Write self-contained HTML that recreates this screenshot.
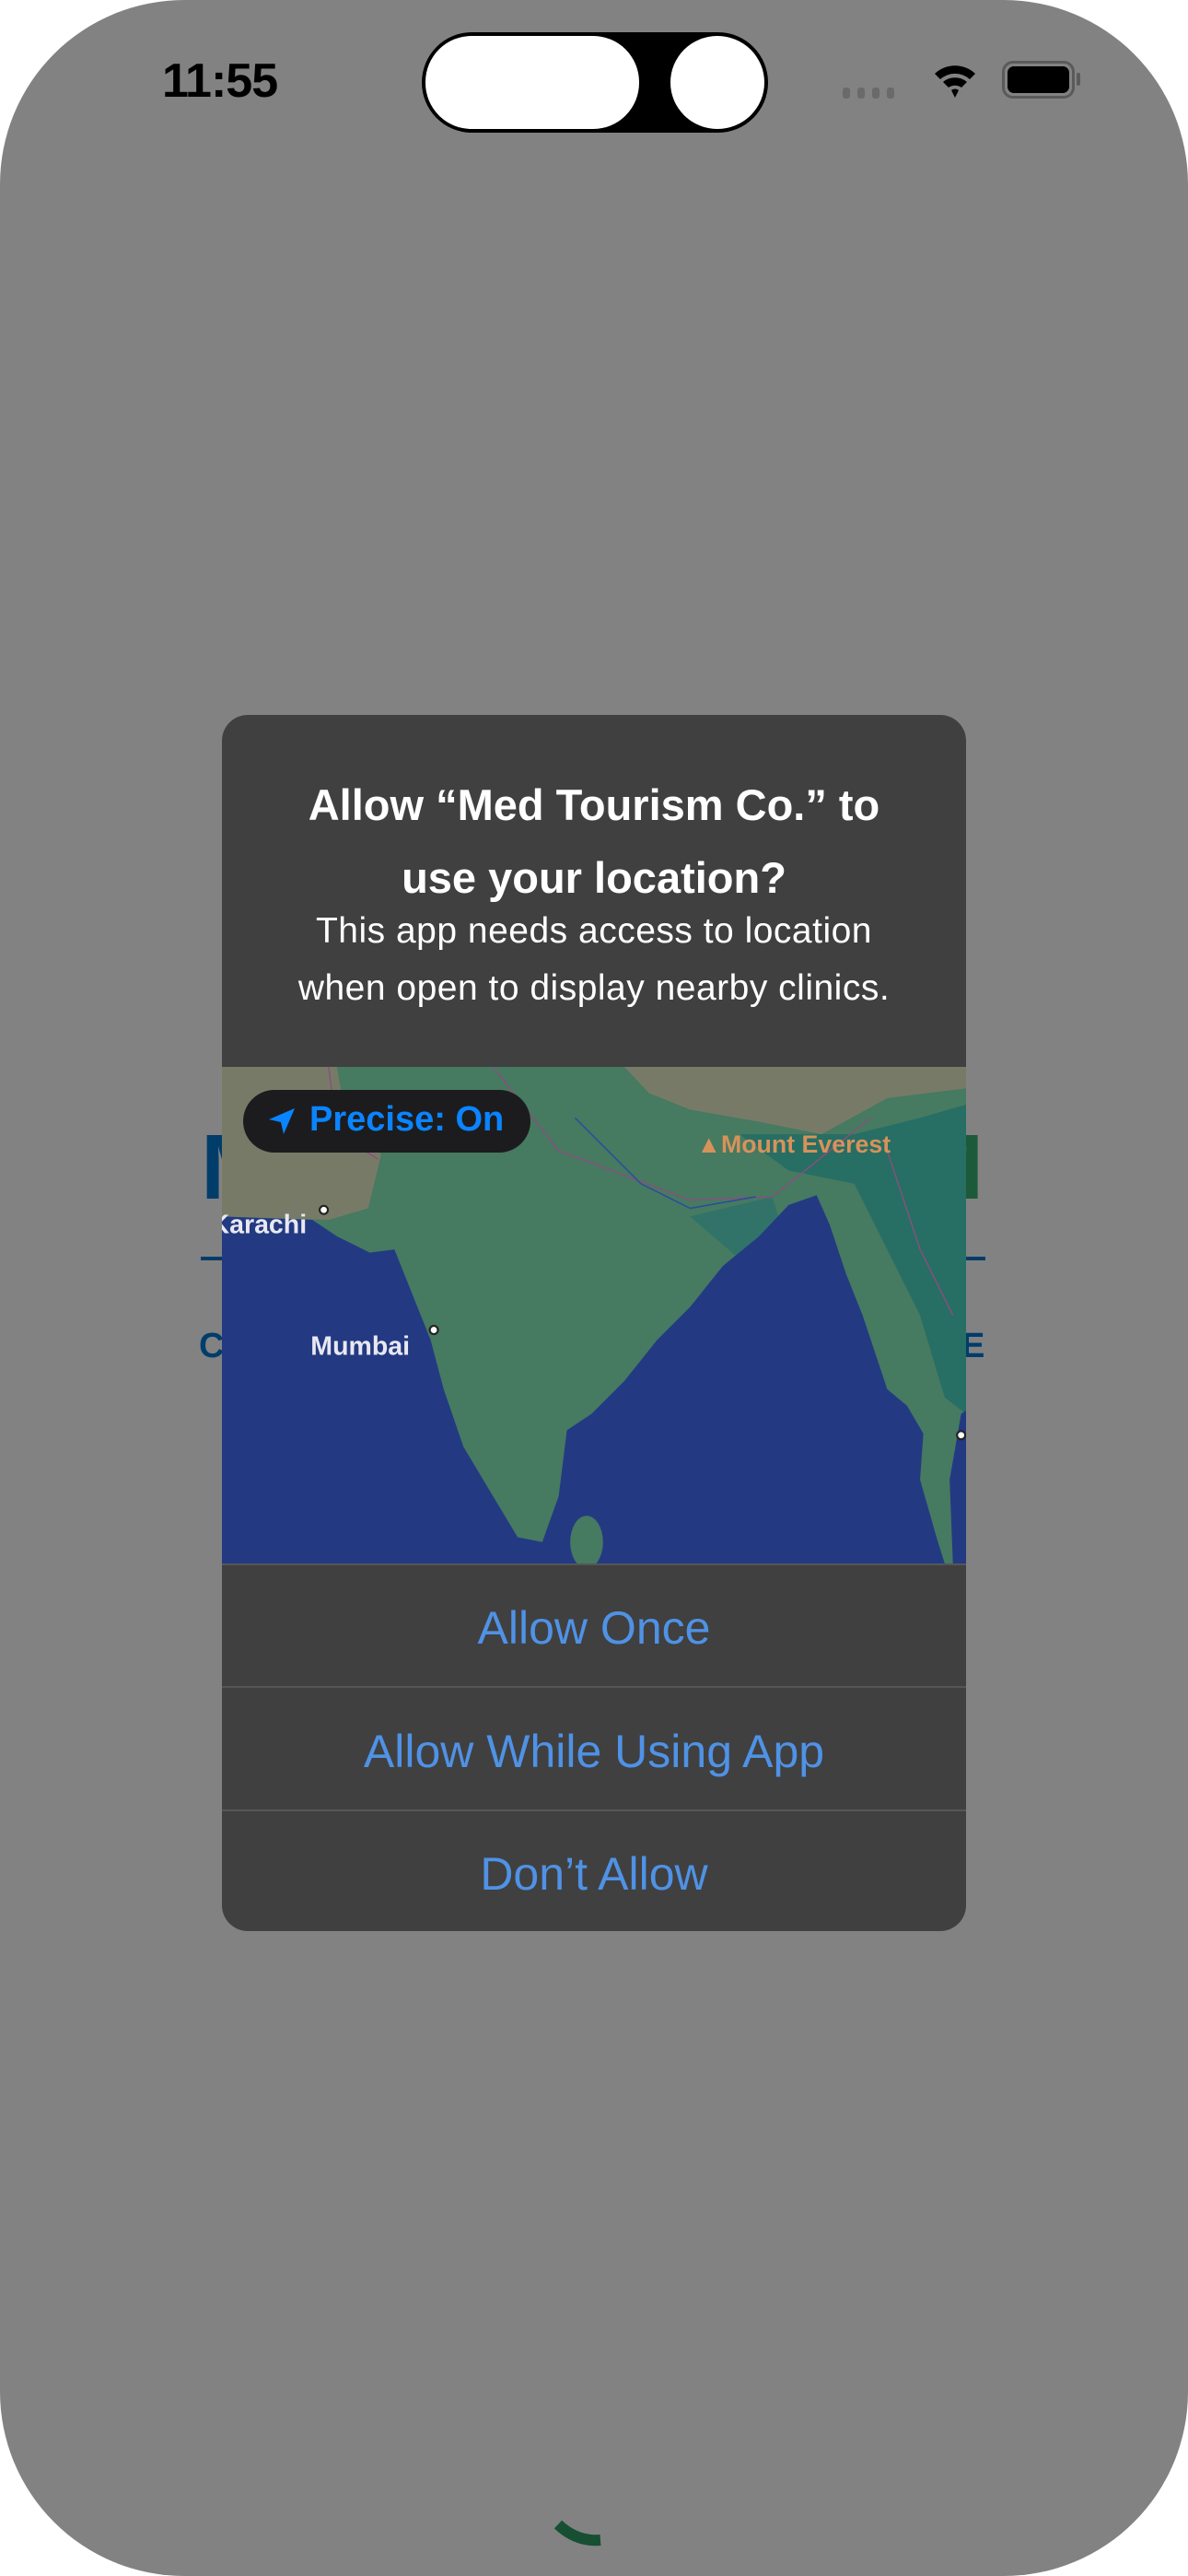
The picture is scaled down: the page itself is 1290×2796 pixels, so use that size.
<!DOCTYPE html>
<html><head><meta charset="utf-8"><style>
*{margin:0;padding:0;box-sizing:border-box}
body{width:1290px;height:2796px;background:#fff;overflow:hidden;font-family:"Liberation Sans",sans-serif;position:relative}
.screen{position:absolute;left:0;top:0;width:1290px;height:2796px;background:#828282;border-radius:200px}
.abs{position:absolute}
.dlg{position:absolute;left:241px;top:776px;width:808px;height:1320px;background:#404040;border-radius:28px;overflow:hidden}
.t{position:absolute;left:0;width:808px;text-align:center;color:#fff}
.btn{position:absolute;left:0;width:808px;text-align:center;color:#4f92e6;font-size:50px}
.div{position:absolute;left:0;width:808px;height:2px;background:#565656}
</style></head><body>
<div class="screen"></div>
<div class="abs" style="left:176px;top:58px;font-size:52px;font-weight:bold;color:#000;letter-spacing:-1px">11:55</div>
<div class="abs" style="left:458px;top:35px;width:376px;height:109px;background:#000;border-radius:55px"></div>
<div class="abs" style="left:462px;top:39px;width:232px;height:101px;background:#fff;border-radius:50px"></div>
<div class="abs" style="left:728px;top:39px;width:102px;height:101px;background:#fff;border-radius:50%"></div>
<div class="abs" style="left:915px;top:95px;width:8px;height:12px;background:#6a6a6a;border-radius:3px"></div>
<div class="abs" style="left:931px;top:95px;width:8px;height:12px;background:#6a6a6a;border-radius:3px"></div>
<div class="abs" style="left:947px;top:95px;width:8px;height:12px;background:#6a6a6a;border-radius:3px"></div>
<div class="abs" style="left:963px;top:95px;width:8px;height:12px;background:#6a6a6a;border-radius:3px"></div>
<svg class="abs" style="left:1012px;top:64px" width="50" height="46" viewBox="0 0 50 46"><path d="M3 16 A32 32 0 0 1 47 16 L41 22 A24 24 0 0 0 9 22Z M12 25 A20 20 0 0 1 38 25 L32 31 A12 12 0 0 0 18 31Z M21 34 A6 6 0 0 1 29 34 L25 42Z" fill="#000"/></svg>
<div class="abs" style="left:1088px;top:66px;width:79px;height:41px;border:3px solid #5a5a5a;border-radius:12px"></div>
<div class="abs" style="left:1094px;top:72px;width:67px;height:29px;background:#000;border-radius:7px"></div>
<div class="abs" style="left:1169px;top:79px;width:4px;height:14px;background:#5a5a5a;border-radius:2px"></div>
<div class="abs" style="left:218px;top:1210px;font-size:100px;font-weight:bold;color:#003d6b">M</div>
<div class="abs" style="left:985px;top:1210px;font-size:100px;font-weight:bold;color:#1d5a3a">M</div>
<div class="abs" style="left:218px;top:1364px;width:40px;height:4px;background:#003d6b"></div>
<div class="abs" style="left:1040px;top:1364px;width:30px;height:4px;background:#003d6b"></div>
<div class="abs" style="left:216px;top:1440px;font-size:38px;font-weight:bold;color:#003d6b">C</div>
<div class="abs" style="left:1044px;top:1440px;font-size:38px;font-weight:bold;color:#003d6b">E</div>
<div class="dlg">
<div class="t" style="top:58px;font-size:47px;line-height:79px;font-weight:bold">Allow “Med Tourism Co.” to<br>use your location?</div>
<div class="t" style="top:204px;font-size:39px;line-height:62px;letter-spacing:0.5px">This app needs access to location<br>when open to display nearby clinics.</div>
<svg class="abs" style="left:0;top:382px" width="808" height="539" viewBox="135 649 453 302" preserveAspectRatio="none">
<rect x="135" y="649" width="453" height="302" fill="#467a61"/>
<path d="M135 649 L205 649 L212 690 L232 702 L224 735 L200 742 L135 740Z" fill="#787a68"/>
<path d="M380 649 L588 649 L588 662 L540 668 L500 690 L460 682 L420 675 L395 665Z" fill="#787a68"/>
<path d="M450 690 L520 690 L560 680 L588 672 L588 860 L575 850 L560 800 L540 760 L520 720 L480 712Z" fill="#1f6c65" opacity="0.8"/>
<path d="M420 740 L470 728 L480 760 L455 770Z" fill="#28706b" opacity="0.7"/>
<path d="M135 740 L190 742 L205 752 L225 762 L240 760 L250 785 L262 815 L270 845 L282 880 L300 910 L315 935 L330 938 L340 910 L345 870 L360 860 L380 840 L400 815 L420 795 L440 770 L462 752 L480 733 L497 727 L505 745 L515 775 L525 800 L535 830 L540 845 L552 855 L562 872 L560 900 L570 935 L575 951 L135 951Z" fill="#233a82"/>
<ellipse cx="357" cy="938" rx="10" ry="16" fill="#467a61"/>
<path d="M585 860 L588 858 L588 951 L580 951 L578 900Z" fill="#233a82"/>
<path d="M200 649 L205 690 L230 705 M300 649 L340 700 L420 730 L470 728 L530 680 M540 700 L560 760 L580 800" stroke="#8a4f7e" stroke-width="0.8" fill="none"/>
<path d="M350 680 L390 720 L420 735 L460 728" stroke="#2b4aa0" stroke-width="0.8" fill="none"/>
<text x="128" y="750" font-family="Liberation Sans" font-weight="bold" font-size="16" fill="#e8e8f0">Karachi</text>
<circle cx="197" cy="736" r="2.5" fill="#fff" stroke="#222" stroke-width="1.2"/>
<text x="189" y="824" font-family="Liberation Sans" font-weight="bold" font-size="16" fill="#e8e8f0">Mumbai</text>
<circle cx="264" cy="809" r="2.5" fill="#fff" stroke="#222" stroke-width="1.2"/>
<circle cx="585" cy="873" r="2.5" fill="#fff" stroke="#222" stroke-width="1.2"/>
<text x="424" y="701" font-family="Liberation Sans" font-weight="bold" font-size="15" fill="#d7925a">▲Mount Everest</text>
</svg>
<div class="abs" style="left:23px;top:407px;width:312px;height:68px;background:#1c1c1e;border-radius:34px"></div>
<svg class="abs" style="left:47px;top:423px" width="36" height="36" viewBox="0 0 36 36"><path d="M32 4 L4 16 L17 19 L20 32Z" fill="#0a84ff"/></svg>
<div class="abs" style="left:95px;top:418px;font-size:38px;font-weight:bold;color:#0a84ff">Precise: On</div>
<div class="div" style="top:921px"></div>
<div class="btn" style="top:962px">Allow Once</div>
<div class="div" style="top:1054px"></div>
<div class="btn" style="top:1096px">Allow While Using App</div>
<div class="div" style="top:1188px"></div>
<div class="btn" style="top:1229px">Don’t Allow</div>
</div>
<svg class="abs" style="left:590px;top:2720px" width="80" height="50"><path d="M16 20 Q36 39 62 37" stroke="#174f33" stroke-width="12" fill="none"/></svg>
</body></html>
